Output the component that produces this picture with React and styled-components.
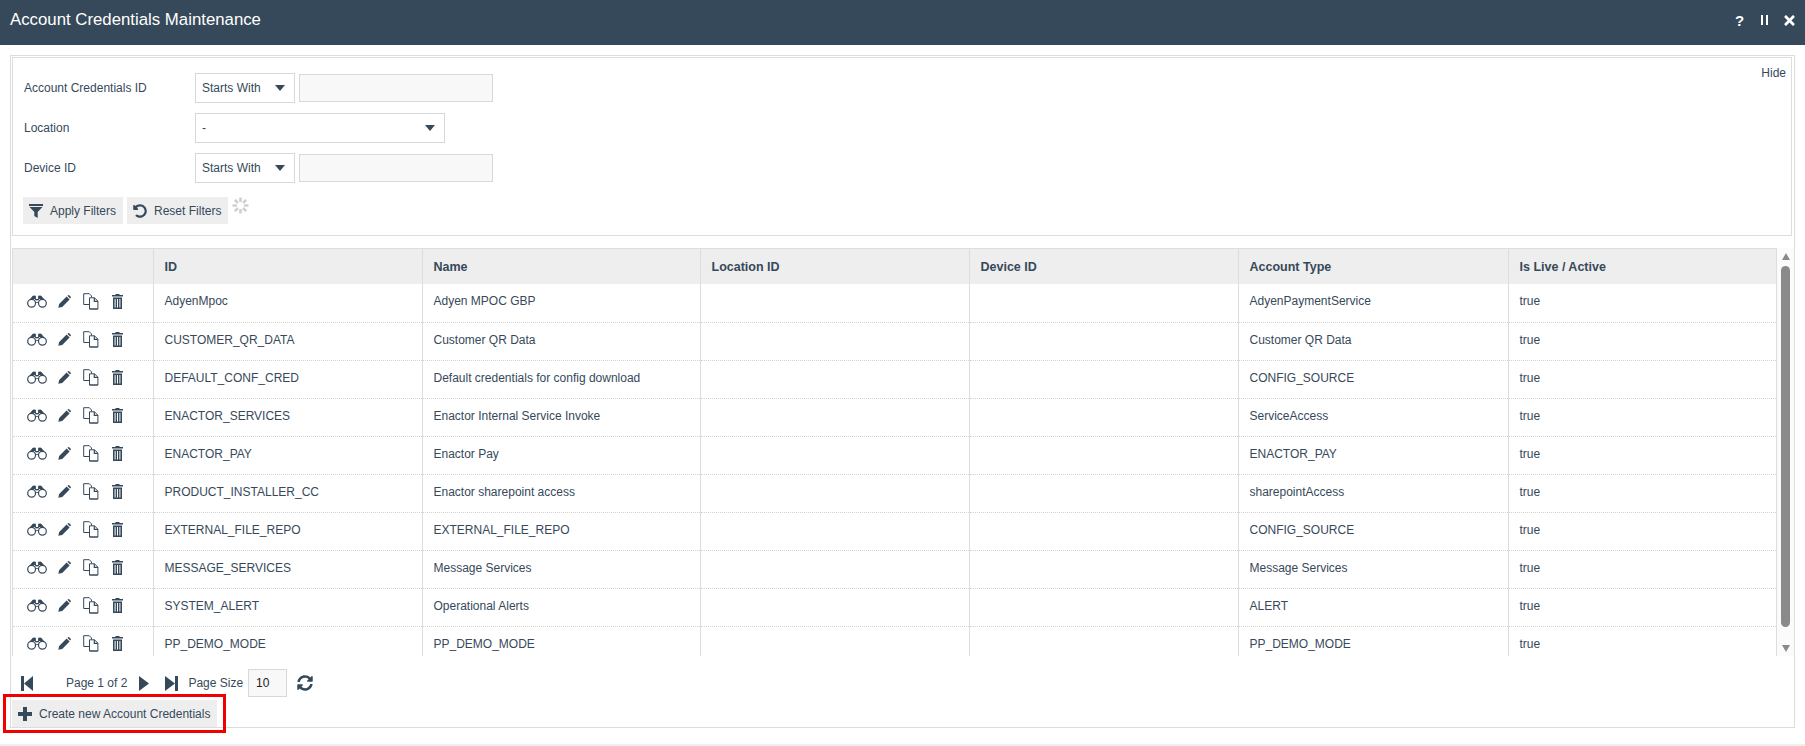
import React from 'react';
import styled, { createGlobalStyle } from 'styled-components';
import { FaSyncAlt, FaTimes, FaUndoAlt } from 'react-icons/fa';

const INK = '#36495a';
const LINE = '#dddddd';

const GlobalStyle = createGlobalStyle`
  html, body {
    margin: 0;
    padding: 0;
    height: 100%;
    background: #ffffff;
    overflow: hidden;
  }
  body {
    font-family: "Liberation Sans", Arial, sans-serif;
    font-size: 12px;
    color: ${INK};
  }
`;

const Page = styled.div`
  width: 1805px;
  height: 746px;
  display: flex;
  flex-direction: column;
`;

const TitleBar = styled.header`
  height: 45px;
  flex: none;
  box-sizing: border-box;
  background: ${INK};
  color: #ffffff;
  display: flex;
  align-items: center;
  justify-content: space-between;
  padding: 0 3px 5px 10px;
`;

const Title = styled.h1`
  margin: 0;
  font-size: 16.8px;
  font-weight: 400;
`;

const TitleActions = styled.div`
  display: grid;
  grid-template-columns: repeat(3, 25px);
  justify-items: center;
  align-items: center;
  font-weight: 700;
  font-size: 15px;
`;

const PauseBars = styled.span`
  width: 7px;
  height: 10px;
  border-left: 2.5px solid #fff;
  border-right: 2.5px solid #fff;
  box-sizing: border-box;
`;

const Body = styled.main`
  flex: 1;
  padding: 10px 10px 0 10px;
  display: flex;
  flex-direction: column;
`;

const Outer = styled.section`
  height: 673px;
  flex: none;
  box-sizing: border-box;
  border: 1px solid ${LINE};
  padding: 1px 2px 0 1px;
  display: flex;
  flex-direction: column;
`;

const FilterBox = styled.div`
  position: relative;
  height: 179px;
  flex: none;
  box-sizing: border-box;
  border: 1px solid ${LINE};
  padding: 15px 0 0 11px;
  display: flex;
  flex-direction: column;
  gap: 10px;
`;

const HideLink = styled.a`
  position: absolute;
  top: 8px;
  right: 5px;
  color: ${INK};
`;

const FilterRow = styled.div`
  display: flex;
  align-items: center;
  gap: 4px;
  height: 30px;
`;

const FilterLabel = styled.label`
  width: 167px;
  flex: none;
`;

const SelectBox = styled.div`
  width: ${({ $width }) => $width}px;
  height: 30px;
  box-sizing: border-box;
  border: 1px solid #d8d8d8;
  background: #fff;
  display: flex;
  align-items: center;
  justify-content: space-between;
  padding: 0 9px 0 6px;
`;

const Caret = styled.span`
  width: 0;
  height: 0;
  border-left: 5px solid transparent;
  border-right: 5px solid transparent;
  border-top: 6px solid ${INK};
`;

const TextField = styled.div`
  width: 194px;
  height: 28px;
  box-sizing: border-box;
  border: 1px solid #d8d8d8;
  background: #f8f8f8;
`;

const FilterButtons = styled.div`
  display: flex;
  align-items: flex-start;
  gap: 4px;
  margin-top: 4px;
  margin-left: -1px;
`;

const GreyButton = styled.button`
  height: 27px;
  border: 0;
  background: #eeeeee;
  color: ${INK};
  font: inherit;
  display: inline-flex;
  align-items: center;
  gap: 7px;
  padding: 0 7px 0 6px;
  white-space: nowrap;
`;

const TableWrap = styled.div`
  margin: 12px -2px 0 0;
  height: 408px;
  flex: none;
  display: flex;
`;

const TableClip = styled.div`
  width: 1765px;
  flex: none;
  overflow: hidden;
  box-sizing: border-box;
  border-left: 1px solid ${LINE};
  border-top: 1px solid ${LINE};
  border-right: 1px solid ${LINE};
`;

const Table = styled.table`
  width: 100%;
  table-layout: fixed;
  border-collapse: collapse;
`;

const HeadCell = styled.th`
  height: 35px;
  padding: 0 10px 0 11px;
  background: #eeeeee;
  border-left: 1px solid ${LINE};
  font-size: 12.5px;
  font-weight: 700;
  text-align: left;
  &:first-child {
    border-left: 0;
  }
`;

const Row = styled.tr`
  height: 38px;
  border-bottom: 1px dotted #d4d4d4;
`;

const Cell = styled.td`
  padding: 0 10px 3px 11px;
  border-left: 1px solid ${LINE};
  white-space: nowrap;
  overflow: hidden;
  &:first-child {
    border-left: 0;
    padding-left: 10px;
  }
`;

const ActionIcons = styled.div`
  display: grid;
  grid-template-columns: repeat(4, 26.7px);
  justify-items: center;
  align-items: center;
  padding-left: 1px;
`;

const ScrollBar = styled.div`
  width: 17px;
  flex: none;
  background: #fbfbfb;
  display: flex;
  flex-direction: column;
  align-items: center;
`;

const ScrollUp = styled.span`
  margin-top: 5px;
  width: 0;
  height: 0;
  border-left: 4.5px solid transparent;
  border-right: 4.5px solid transparent;
  border-bottom: 7px solid #8a8a8a;
`;

const ScrollThumb = styled.span`
  margin-top: 6px;
  width: 9px;
  height: 361px;
  background: #8a8a8a;
  border-radius: 5px;
`;

const ScrollDown = styled.span`
  margin-top: 18px;
  width: 0;
  height: 0;
  border-left: 4.5px solid transparent;
  border-right: 4.5px solid transparent;
  border-top: 7px solid #8a8a8a;
`;

const Pager = styled.div`
  height: 44px;
  flex: none;
  display: flex;
  align-items: center;
  padding: 10px 0 0 9px;
  box-sizing: border-box;
`;

const PageText = styled.span`
  margin-left: ${({ $left }) => $left}px;
`;

const PageSize = styled.div`
  width: 39px;
  height: 28px;
  margin-left: 5px;
  box-sizing: border-box;
  border: 1px solid #d8d8d8;
  background: #f8f8f8;
  color: #222;
  display: flex;
  align-items: center;
  padding-left: 7px;
`;

const PagerIcon = styled.span`
  display: inline-flex;
  margin-left: ${({ $left }) => $left}px;
`;

const CreateWrap = styled.div`
  position: relative;
  align-self: flex-start;
`;

const RedFrame = styled.span`
  position: absolute;
  left: -9px;
  top: -6px;
  width: 223px;
  height: 39px;
  box-sizing: border-box;
  border: 3px solid #f00000;
  pointer-events: none;
`;

const BottomStrip = styled.div`
  height: 2px;
  margin: 16px -10px 0 -10px;
  background: #efefef;
  flex: none;
`;

const Funnel = () => (
  <svg width="14" height="14" viewBox="0 0 14 14" fill={INK}>
    <rect x="0" y="0" width="14" height="2" />
    <path d="M0.5 3h13L8.7 8v6L5.3 12V8z" />
  </svg>
);

const Spinner = () => (
  <svg width="17" height="17" viewBox="0 0 17 17" fill="#cfcfcf">
    {[0, 45, 90, 135, 180, 225, 270, 315].map((a) => (
      <rect key={a} x="7.2" y="0.5" width="2.6" height="4.5" rx="0.6" transform={`rotate(${a} 8.5 8.5)`} />
    ))}
  </svg>
);

const Binoculars = () => (
  <svg width="20" height="13" viewBox="0 0 20 13" fill="none" stroke={INK}>
    <circle cx="4.6" cy="8.3" r="3.9" strokeWidth="1.2" />
    <circle cx="15.4" cy="8.3" r="3.9" strokeWidth="1.2" />
    <path d="M3.5 4 6 1h2.5v4h3V1H14l2.5 3M8.5 7.5h3" fill={INK} strokeWidth="0.8" />
  </svg>
);

const Pencil = () => (
  <svg width="13" height="13" viewBox="0 0 13 13" fill={INK}>
    <path d="M0.3 12.7 1.2 9 8.6 1.6l3 3L4.2 12zM9.4 0.8 10.2 0.2q.5-.3 1 .1l1.5 1.5q.4.5 0 1L12 3.6z" />
  </svg>
);

const CopyDoc = () => (
  <svg width="16" height="17" viewBox="0 0 16 17" fill="none" stroke={INK}>
    <path d="M6.5 11.5H.7V.7h5.6l2.2 2.2v1.6" strokeWidth="1" />
    <path d="M6.5 4.8h5l3.4 3.4V16H6.5z" fill="#fff" strokeWidth="1" />
    <path d="M11.3 4.8v3.6h3.6M6.5 16h8.4" strokeWidth="1.2" />
  </svg>
);

const Trash = () => (
  <svg width="11" height="15" viewBox="0 0 11 15" fill={INK}>
    <path d="M3.5 0h4v1H11v1.6H0V1h3.5z" />
    <path d="M1 3.5h9V15H1zM2.6 5v8.5h1V5zM5 5v8.5h1V5zM7.4 5v8.5h1V5z" fillRule="evenodd" />
  </svg>
);

const StepFirst = () => (
  <svg width="12" height="15" viewBox="0 0 12 15" fill={INK}>
    <rect x="0" y="0" width="3" height="15" />
    <path d="M12 0v15L3 7.5z" />
  </svg>
);

const StepLast = () => (
  <svg width="13" height="15" viewBox="0 0 13 15" fill={INK}>
    <rect x="10" y="0" width="3" height="15" />
    <path d="M0 0v15l10-7.5z" />
  </svg>
);

const PlayNext = () => (
  <svg width="10" height="15" viewBox="0 0 10 15" fill={INK}>
    <path d="M0 0v15l10-7.5z" />
  </svg>
);

const PlusMark = () => (
  <svg width="14" height="14" viewBox="0 0 14 14" fill={INK}>
    <path d="M5 0h4v5h5v4H9v5H5V9H0V5h5z" />
  </svg>
);

const columns = [
  { title: '', width: 140 },
  { title: 'ID', width: 269 },
  { title: 'Name', width: 278 },
  { title: 'Location ID', width: 269 },
  { title: 'Device ID', width: 269 },
  { title: 'Account Type', width: 270 },
  { title: 'Is Live / Active' },
];

const rows = [
  ['AdyenMpoc', 'Adyen MPOC GBP', 'AdyenPaymentService'],
  ['CUSTOMER_QR_DATA', 'Customer QR Data', 'Customer QR Data'],
  ['DEFAULT_CONF_CRED', 'Default credentials for config download', 'CONFIG_SOURCE'],
  ['ENACTOR_SERVICES', 'Enactor Internal Service Invoke', 'ServiceAccess'],
  ['ENACTOR_PAY', 'Enactor Pay', 'ENACTOR_PAY'],
  ['PRODUCT_INSTALLER_CC', 'Enactor sharepoint access', 'sharepointAccess'],
  ['EXTERNAL_FILE_REPO', 'EXTERNAL_FILE_REPO', 'CONFIG_SOURCE'],
  ['MESSAGE_SERVICES', 'Message Services', 'Message Services'],
  ['SYSTEM_ALERT', 'Operational Alerts', 'ALERT'],
  ['PP_DEMO_MODE', 'PP_DEMO_MODE', 'PP_DEMO_MODE'],
];

const App = () => {
  return (
    <Page>
      <GlobalStyle />
      <TitleBar>
        <Title>Account Credentials Maintenance</Title>
        <TitleActions>
          <span>?</span>
          <PauseBars />
          <FaTimes size={15} />
        </TitleActions>
      </TitleBar>

      <Body>
        <Outer>
          <FilterBox>
            <HideLink>Hide</HideLink>
            <FilterRow>
              <FilterLabel>Account Credentials ID</FilterLabel>
              <SelectBox $width={100}>Starts With <Caret /></SelectBox>
              <TextField />
            </FilterRow>
            <FilterRow>
              <FilterLabel>Location</FilterLabel>
              <SelectBox $width={250}>- <Caret /></SelectBox>
            </FilterRow>
            <FilterRow>
              <FilterLabel>Device ID</FilterLabel>
              <SelectBox $width={100}>Starts With <Caret /></SelectBox>
              <TextField />
            </FilterRow>
            <FilterButtons>
              <GreyButton><Funnel /> Apply Filters</GreyButton>
              <GreyButton><FaUndoAlt size={14} /> Reset Filters</GreyButton>
              <Spinner />
            </FilterButtons>
          </FilterBox>

          <TableWrap>
            <TableClip>
              <Table>
                <colgroup>
                  {columns.map((c) => (
                    <col key={c.title} style={c.width ? { width: c.width } : undefined} />
                  ))}
                </colgroup>
                <thead>
                  <tr>
                    {columns.map((c) => <HeadCell key={c.title}>{c.title}</HeadCell>)}
                  </tr>
                </thead>
                <tbody>
                  {rows.map((r) => (
                    <Row key={r[0]}>
                      <Cell>
                        <ActionIcons>
                          <Binoculars />
                          <Pencil />
                          <CopyDoc />
                          <Trash />
                        </ActionIcons>
                      </Cell>
                      <Cell>{r[0]}</Cell>
                      <Cell>{r[1]}</Cell>
                      <Cell />
                      <Cell />
                      <Cell>{r[2]}</Cell>
                      <Cell>true</Cell>
                    </Row>
                  ))}
                </tbody>
              </Table>
            </TableClip>
            <ScrollBar>
              <ScrollUp />
              <ScrollThumb />
              <ScrollDown />
            </ScrollBar>
          </TableWrap>

          <Pager>
            <StepFirst />
            <PageText $left={33}>Page 1 of 2</PageText>
            <PagerIcon $left={12}><PlayNext /></PagerIcon>
            <PagerIcon $left={16}><StepLast /></PagerIcon>
            <PageText $left={10}>Page Size</PageText>
            <PageSize>10</PageSize>
            <PagerIcon $left={10}><FaSyncAlt size={16} /></PagerIcon>
          </Pager>

          <CreateWrap>
            <RedFrame />
            <GreyButton><PlusMark /> Create new Account Credentials</GreyButton>
          </CreateWrap>
        </Outer>
        <BottomStrip />
      </Body>
    </Page>
  );
};

export default App;
